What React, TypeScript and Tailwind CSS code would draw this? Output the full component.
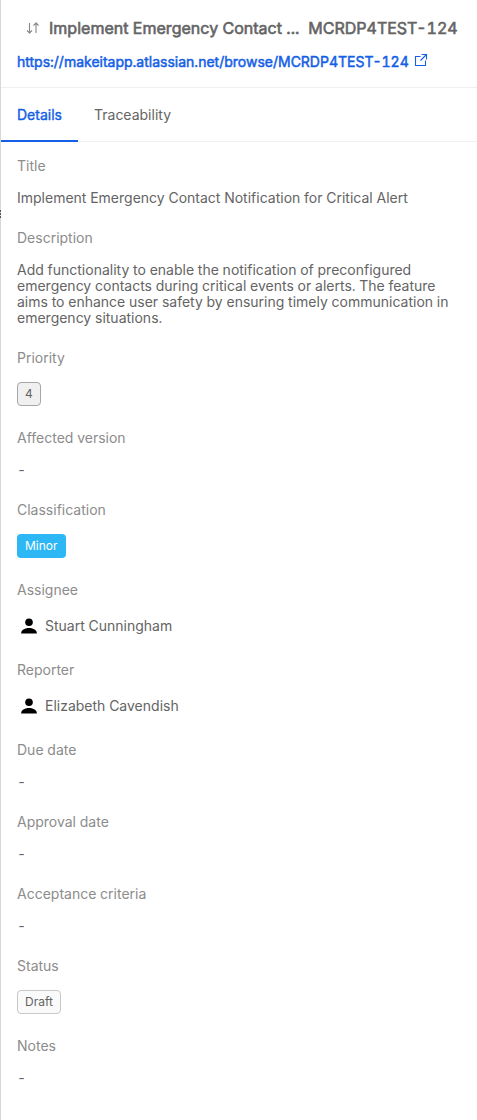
import React from "react";

const Label = ({ children }: { children: React.ReactNode }) => (
  <div className="h-6 text-[14px] leading-6 text-[#8c8c8c]">{children}</div>
);

const Field = ({ label, children }: { label: string; children: React.ReactNode }) => (
  <div className="mb-4">
    <Label>{label}</Label>
    <div className="pt-3">{children}</div>
  </div>
);

const Dash = () => <div className="h-5 leading-4">-</div>;

const Person = ({ name }: { name: string }) => (
  <div className="flex h-7 items-start gap-1">
    <svg className="size-6" viewBox="0 0 24 24" fill="#000">
      <circle cx="12" cy="8.2" r="3.8" />
      <path d="M4.2 19.4v-.6C4.2 15.8 8.6 14 12 14s7.8 1.8 7.8 4.8v.6z" />
    </svg>
    <span className="leading-6">{name}</span>
  </div>
);

export default function App() {
  return (
    <div className="relative h-[1120px] w-[477px] overflow-hidden bg-white font-['Inter',sans-serif] text-[14px] tabular-nums text-[#646464]">
      <div className="absolute top-0 left-0 h-full w-px bg-[#d6d8da]">
        <div className="mt-[210px] h-[2px] bg-[#555]" />
        <div className="mt-px h-[2px] bg-[#555]" />
        <div className="mt-px h-[2px] bg-[#555]" />
      </div>
      <div className="pl-px">
        <header className="h-[88px] border-b border-[#f0f0f0] px-4 pt-4">
          <div className="flex h-6 items-center whitespace-nowrap text-[16px] [-webkit-text-stroke:0.6px_currentColor]">
            <svg className="mr-2 ml-2 size-4 shrink-0" viewBox="0 0 16 16" fill="none" stroke="#888" strokeWidth="1.1">
              <path d="M4.5 3v10L2 10.5M4.5 13L7 10.5M11 13V3L8.5 5.5M11 3l2.5 2.5" />
            </svg>
            <span className="tracking-[0.02px]">Implement Emergency Contact ...</span>
            <span className="ml-[9px]">MCRDP4TEST-124</span>
          </div>
          <div className="mt-2 flex h-6 items-center whitespace-nowrap text-[#145fe6]">
            <span className="pt-0.5 [-webkit-text-stroke:0.5px_currentColor]">https://makeitapp.atlassian.net/browse/MCRDP4TEST-124</span>
            <svg className="ml-1 size-4" viewBox="0 0 16 16" fill="none" stroke="currentColor" strokeWidth="1.1">
              <path d="M7.5 4.5h-5v9h10v-5M8.5 2.5h5v5M13.5 2.5l-6 6" />
            </svg>
          </div>
        </header>
        <nav className="flex h-[54px] border-b border-[#f0f0f0]">
          <div className="h-[54px] w-[77px] border-b-2 border-[#145fe6] pl-4 leading-[54px] text-[#145fe6] [-webkit-text-stroke:0.4px_currentColor]">Details</div>
          <div className="pl-4 leading-[54px]">Traceability</div>
        </nav>
        <main className="px-4 pt-3">
          <Field label="Title"><div className="h-5 leading-4">Implement Emergency Contact Notification for Critical Alert</div></Field>
          <Field label="Description">
            <div className="h-[68px] leading-4">Add functionality to enable the notification of preconfigured<br />emergency contacts during critical events or alerts. The feature<br />aims to enhance user safety by ensuring timely communication in<br />emergency situations.</div>
          </Field>
          <Field label="Priority"><div className="h-7"><span className="inline-flex h-6 items-center rounded border border-[#a6a6a6] bg-[#f0f0f0] px-[7px] text-[12px]">4</span></div></Field>
          <Field label="Affected version"><Dash /></Field>
          <Field label="Classification"><div className="h-7"><span className="inline-flex h-6 items-center rounded bg-[#2db7f5] px-2 text-[12px] text-white">Minor</span></div></Field>
          <Field label="Assignee"><Person name="Stuart Cunningham" /></Field>
          <Field label="Reporter"><Person name="Elizabeth Cavendish" /></Field>
          <Field label="Due date"><Dash /></Field>
          <Field label="Approval date"><Dash /></Field>
          <Field label="Acceptance criteria"><Dash /></Field>
          <Field label="Status"><div className="h-7"><span className="inline-flex h-6 items-center rounded border border-[#c8c8c8] bg-[#fafafa] px-[7px] text-[12px]">Draft</span></div></Field>
          <Field label="Notes"><Dash /></Field>
        </main>
      </div>
    </div>
  );
}
